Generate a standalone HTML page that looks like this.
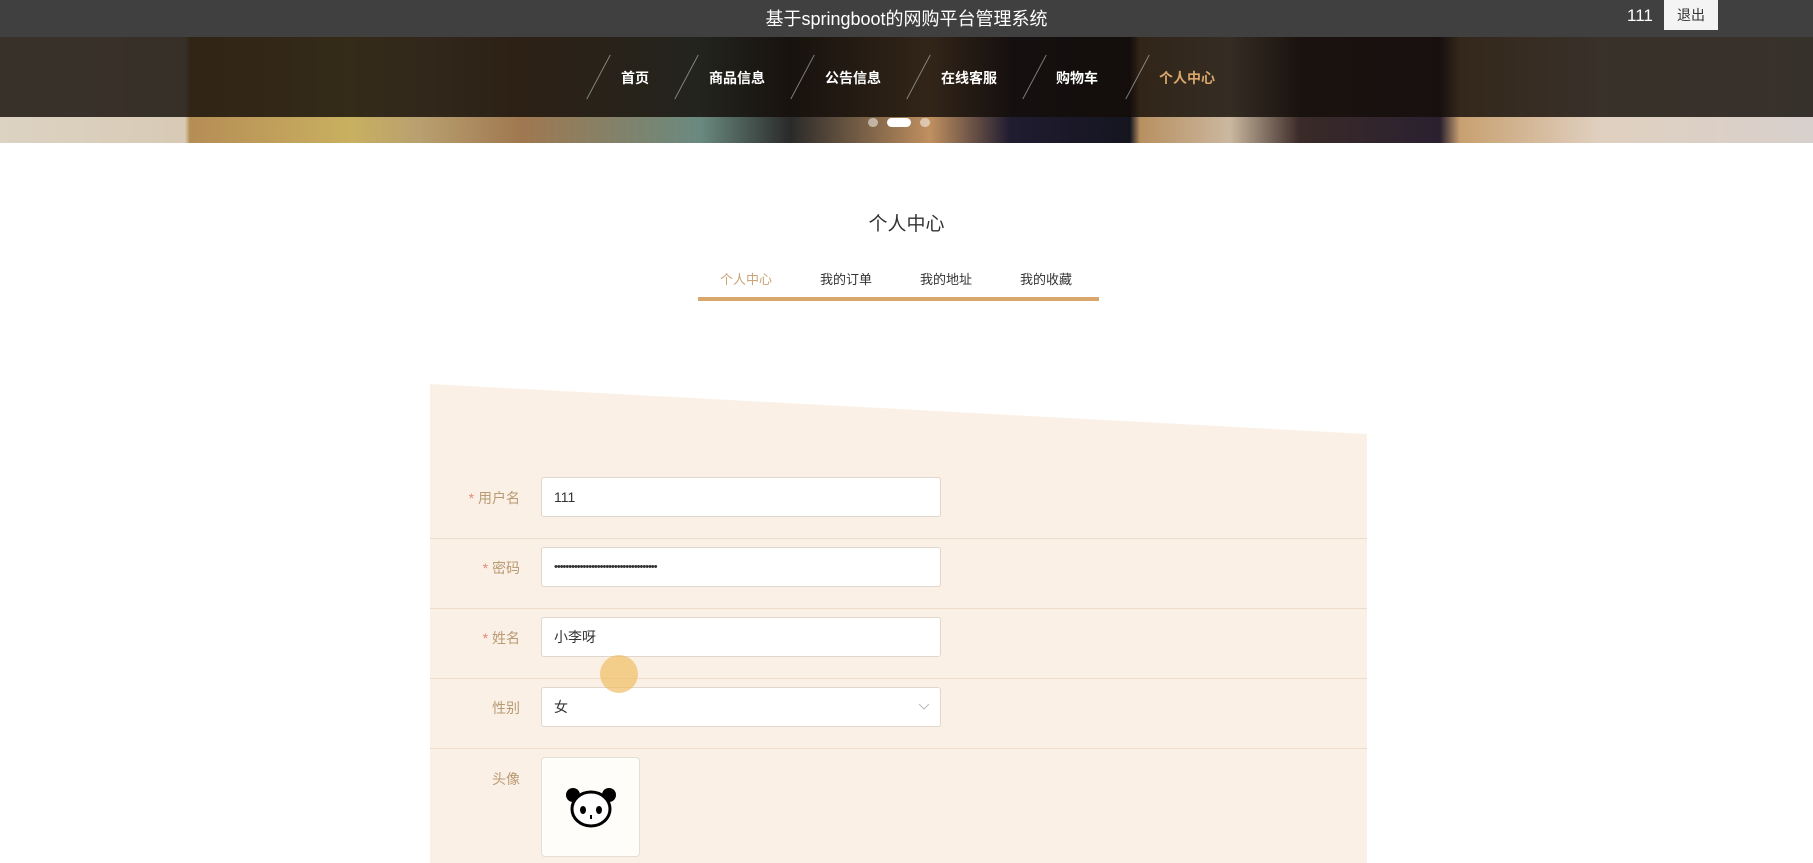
<!DOCTYPE html>
<html><head><meta charset="utf-8"><style>
*{margin:0;padding:0;box-sizing:border-box}
body{width:1813px;height:863px;overflow:hidden;background:#fff;font-family:"Liberation Sans","Noto Sans CJK SC",sans-serif;position:relative}
.top{position:absolute;left:0;top:0;width:1813px;height:37px;background:#404040;color:#fff}
.top .t{position:absolute;left:0;width:100%;text-align:center;top:5px;font-size:18px}
.top .u{position:absolute;left:1627px;top:6px;font-size:17px}
.top .b{position:absolute;left:1664px;top:0;width:54px;height:30px;background:#f4f4f4;color:#333;font-size:14px;text-align:center;line-height:30px}
.banner{position:absolute;left:0;top:37px;width:1813px;height:106px;background:linear-gradient(90deg,#ddd3c3 0,#d8cab5 185px,#b58d55 190px,#c9b060 350px,#b8a070 420px,#a07850 520px,#6a8a80 700px,#2a2a2a 790px,#c09060 930px,#201c30 1010px,#151520 1130px,#b89060 1140px,#cbb8a0 1230px,#3a2a28 1300px,#2a2030 1440px,#c8a070 1460px,#e0d0c0 1600px,#d8d0cc 1813px)}
.band{position:absolute;left:0;top:37px;width:1813px;height:80px;background:rgba(20,14,8,.82)}
.nav{position:absolute;top:68px;font-size:14px;color:#fff;font-weight:bold}
.sl{position:absolute;top:52px;width:1px;height:50px;background:rgba(200,200,200,.6);transform:rotate(28deg)}
.dot{position:absolute;top:118px;height:9px;border-radius:5px;background:rgba(255,255,255,.5)}
h2{position:absolute;left:0;width:1813px;top:209px;text-align:center;font-size:19px;font-weight:normal;color:#333}
.tab{position:absolute;top:269px;font-size:13px;color:#333}
.ul{position:absolute;left:698px;top:297px;width:401px;height:4px;background:#d9a66b}
.panel{position:absolute;left:430px;top:384px;width:937px;height:479px;background:#fbf0e5;clip-path:polygon(0 0,100% 50px,100% 100%,0 100%)}
.sep{position:absolute;left:430px;width:937px;height:1px;background:#eddccb}
.lab{position:absolute;width:90px;left:430px;text-align:right;font-size:14px;color:#b89a74}
.lab i{font-style:normal;color:#e08a7a}
.inp{position:absolute;left:541px;width:400px;height:40px;background:#fff;border:1px solid #e0d6cc;border-radius:3px;font-size:14px;color:#333;padding-left:12px;line-height:38px}
</style></head><body>
<div class="banner"></div>
<div class="band"></div>
<div class="top"><div class="t">基于springboot的网购平台管理系统</div><div class="u">111</div><div class="b">退出</div></div>
<div class="sl" style="left:598px"></div><div class="sl" style="left:686px"></div><div class="sl" style="left:802px"></div><div class="sl" style="left:918px"></div><div class="sl" style="left:1034px"></div><div class="sl" style="left:1137px"></div>
<div class="nav" style="left:621px">首页</div>
<div class="nav" style="left:709px">商品信息</div>
<div class="nav" style="left:825px">公告信息</div>
<div class="nav" style="left:941px">在线客服</div>
<div class="nav" style="left:1056px">购物车</div>
<div class="nav" style="left:1159px;color:#d9a66b">个人中心</div>
<div class="dot" style="left:868px;width:10px"></div>
<div class="dot" style="left:887px;width:24px;background:#fff"></div>
<div class="dot" style="left:920px;width:10px"></div>
<h2>个人中心</h2>
<div class="tab" style="left:720px;color:#c9a377">个人中心</div>
<div class="tab" style="left:820px">我的订单</div>
<div class="tab" style="left:920px">我的地址</div>
<div class="tab" style="left:1020px">我的收藏</div>
<div class="ul"></div>
<div class="panel"></div>
<div class="sep" style="top:538px"></div><div class="sep" style="top:608px"></div><div class="sep" style="top:678px"></div><div class="sep" style="top:748px"></div>
<div class="lab" style="top:488px"><i>* </i>用户名</div>
<div class="lab" style="top:558px"><i>* </i>密码</div>
<div class="lab" style="top:628px"><i>* </i>姓名</div>
<div class="lab" style="top:698px">性别</div>
<div class="lab" style="top:769px">头像</div>
<div class="inp" style="top:477px">111</div>
<div class="inp" style="top:547px;font-size:11px;letter-spacing:-1px">••••••••••••••••••••••••••••••••••••</div>
<div class="inp" style="top:617px">小李呀</div>
<div class="inp" style="top:687px">女<svg style="position:absolute;right:10px;top:15px" width="12" height="8"><path d="M1 1l5 5 5-5" fill="none" stroke="#bbb" stroke-width="1"/></svg></div>
<div style="position:absolute;left:541px;top:757px;width:99px;height:100px;background:#fffdfa;border:1px solid #e6ddd3;border-radius:4px">
<svg width="99" height="100" viewBox="0 0 99 100"><circle cx="31" cy="37" r="7" fill="#000"/><circle cx="67" cy="37" r="7" fill="#000"/><ellipse cx="49" cy="51" rx="19" ry="17" fill="#fff" stroke="#000" stroke-width="3"/><ellipse cx="41" cy="52" rx="3" ry="4" fill="#000"/><ellipse cx="57" cy="52" rx="3" ry="4" fill="#000"/><path d="M49 57v4" stroke="#000" stroke-width="2"/></svg></div>
<div style="position:absolute;left:600px;top:655px;width:38px;height:38px;border-radius:50%;background:rgba(240,190,100,.7)"></div>
</body></html>
